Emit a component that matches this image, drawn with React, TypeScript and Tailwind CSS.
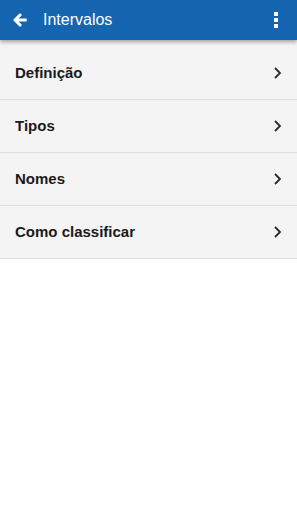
import React from "react";

const items = ["Definição", "Tipos", "Nomes", "Como classificar"];

export default function App() {
  return (
    <div className="w-[297px] h-[512px] bg-white overflow-hidden" style={{ fontFamily: '"Liberation Sans", Arial, sans-serif' }}>
      <div className="relative z-10 h-[40px] bg-[#1565b0] flex items-center shadow-[0_2px_4px_rgba(0,0,0,0.35)]">
        <svg width="18" height="18" viewBox="0 0 24 24" className="ml-[11px]">
          <path d="M20 11H7.83l5.59-5.59L12 4l-8 8 8 8 1.41-1.41L7.83 13H20v-2z" fill="white" stroke="white" strokeWidth="2" strokeLinejoin="round" />
        </svg>
        <span className="ml-[14px] text-white text-[16px]">Intervalos</span>
        <div className="ml-auto mr-[19px] flex flex-col gap-[2px]">
          <span className="block w-[4px] h-[4px] bg-white" />
          <span className="block w-[4px] h-[4px] bg-white" />
          <span className="block w-[4px] h-[4px] bg-white" />
        </div>
      </div>
      <div className="bg-[#f4f4f4] pt-[7px]">
        {items.map((t) => (
          <div key={t} className="h-[53px] flex items-center pl-[15px] pr-[14px] border-b border-[#dedede]">
            <span className="text-[15px] font-bold text-[#1a1a1a]">{t}</span>
            <svg width="10" height="14" viewBox="0 0 10 14" className="ml-auto">
              <path d="M2 2l5 5-5 5" fill="none" stroke="#2a2a2a" strokeWidth="1.8" />
            </svg>
          </div>
        ))}
      </div>
    </div>
  );
}
